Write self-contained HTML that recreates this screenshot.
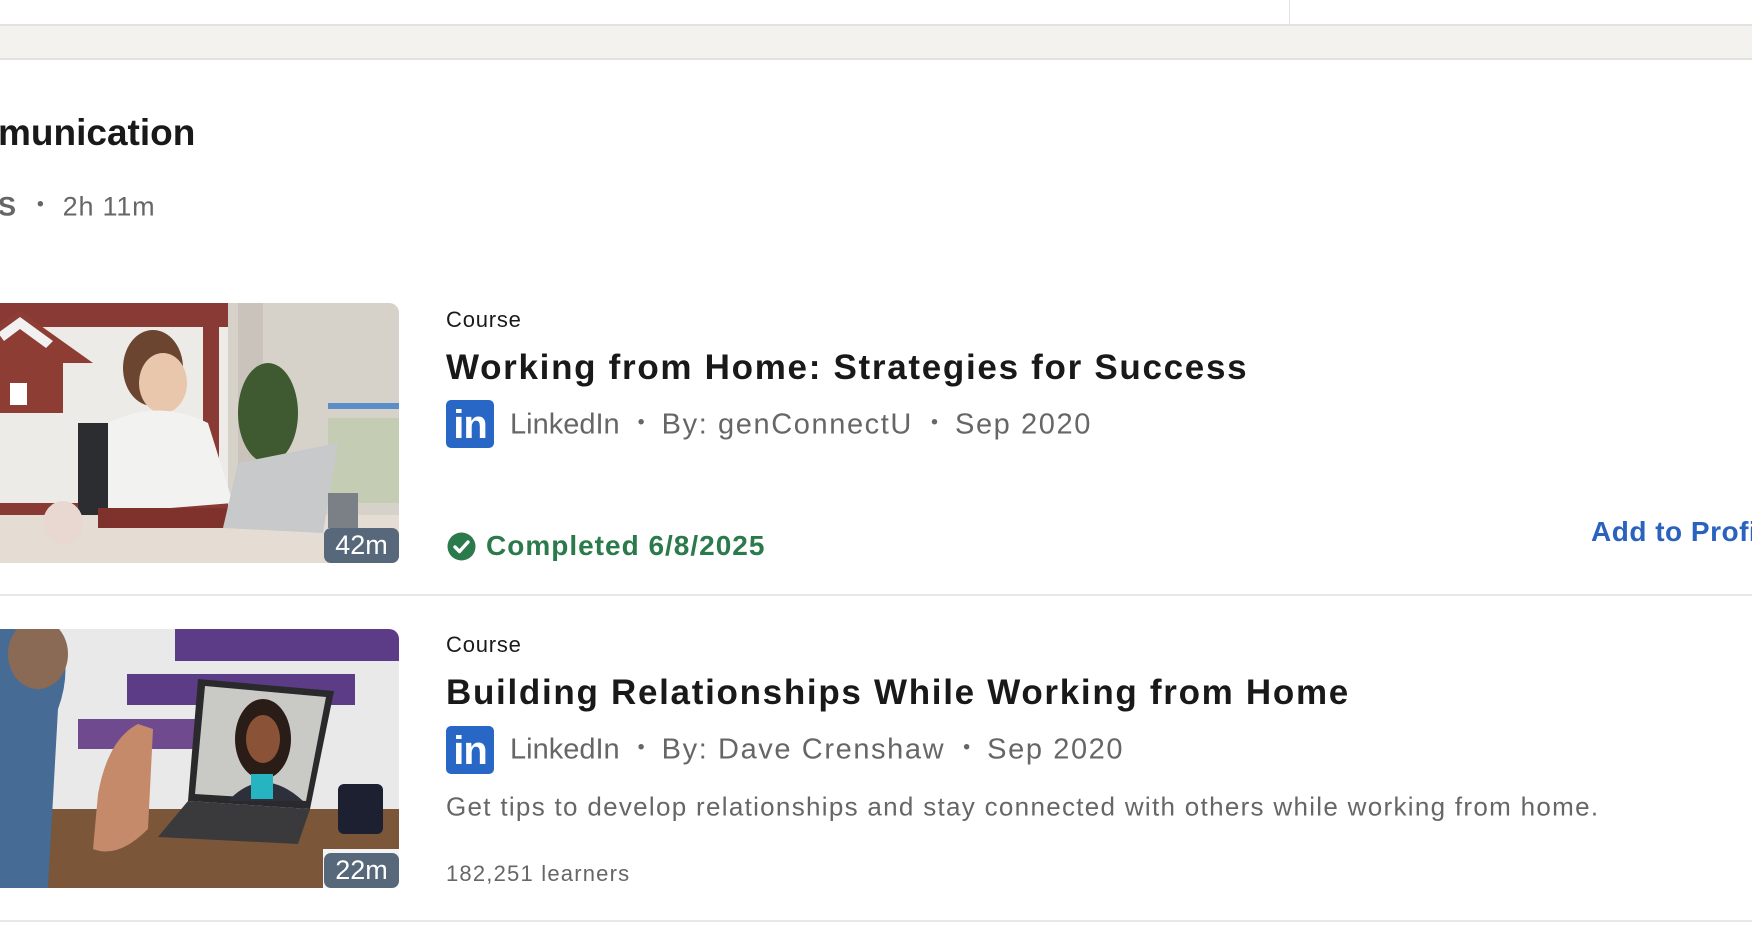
<!DOCTYPE html>
<html><head><meta charset="utf-8">
<style>
*{margin:0;padding:0;box-sizing:border-box}
body{width:1752px;height:928px;overflow:hidden;background:#fff;font-family:"Liberation Sans",Arial,sans-serif;position:relative}
.a{position:absolute;white-space:nowrap}
.c{transform:translateY(-50%)}
.li{position:absolute;width:48px;height:48px;background:#2867c5;border-radius:5px;color:#fff;font-weight:bold;font-size:40px;line-height:50px;text-align:center;letter-spacing:-1px}
.meta{color:#666;font-size:29px}
.meta .s{letter-spacing:1.6px}
.dot{display:inline-block;margin:0 17px 0 18px;font-size:20px;vertical-align:middle;position:relative;top:-3px}
.badge{position:absolute;background:#56687a;color:#fff;font-size:27px;border-radius:7px;text-align:center;line-height:35px}
.thumb{position:absolute;left:-12px;width:411px;border-radius:10px;overflow:hidden}
.t{font-size:35px;font-weight:bold;color:#191919;letter-spacing:1.7px}
</style></head><body>
<div class="a" style="left:0;top:24px;width:1752px;height:2px;background:#e2e2e2"></div>
<div class="a" style="left:0;top:26px;width:1752px;height:33px;background:#f3f2ef"></div>
<div class="a" style="left:0;top:58px;width:1752px;height:2px;background:#e2e2e2"></div>
<div class="a" style="left:1289px;top:0;width:1px;height:24px;background:#e2e2e2"></div>

<div class="a c" style="left:-2px;top:133px;font-size:37px;font-weight:bold;color:#191919">munication</div>
<div class="a c" style="left:-2px;top:207px;font-size:27px;color:#666;letter-spacing:0.8px"><b>S</b><span class="dot" style="margin:0 18px 0 20px">•</span>2h 11m</div>

<!-- thumb 1 -->
<div class="thumb" style="top:303px;height:260px">
<svg width="411" height="260" viewBox="0 0 411 260">
<rect width="411" height="260" fill="#dcd8d1"/>
<rect x="0" y="0" width="240" height="260" fill="#ecebe8"/>
<rect x="0" y="0" width="240" height="24" fill="#8a3a34"/>
<rect x="215" y="10" width="16" height="200" fill="#8a3a34"/>
<rect x="0" y="200" width="240" height="12" fill="#8a3a34"/>
<polygon points="0,30 32,8 105,60 75,60 75,110 0,110" fill="#8e3d35"/>
<polygon points="10,30 32,14 65,38 58,45 32,26 16,38" fill="#f1f1f1"/>
<rect x="22" y="80" width="17" height="22" fill="#fff"/>
<rect x="240" y="0" width="171" height="260" fill="#d6d2c9"/>
<rect x="250" y="0" width="25" height="260" fill="#c9c3bb"/>
<rect x="340" y="115" width="71" height="85" fill="#c4cdb4"/>
<rect x="340" y="100" width="71" height="6" fill="#5b8ec9"/>
<ellipse cx="280" cy="110" rx="30" ry="50" fill="#3f5a30"/>
<rect x="90" y="120" width="40" height="110" fill="#2c2d30"/>
<ellipse cx="165" cy="65" rx="30" ry="38" fill="#6b4530"/>
<ellipse cx="175" cy="80" rx="24" ry="30" fill="#e8c7ad"/>
<path d="M120 120 Q170 95 220 120 L245 200 L120 210 Z" fill="#f2f2f0"/>
<rect x="0" y="212" width="411" height="48" fill="#e5ddd3"/>
<rect x="110" y="205" width="130" height="20" fill="#7f322c"/>
<polygon points="250,160 350,140 335,230 235,225" fill="#c8c9cb"/>
<ellipse cx="75" cy="220" rx="20" ry="22" fill="#e9d8d2"/>
<rect x="340" y="190" width="30" height="35" fill="#7a8085"/>
</svg>
</div>
<div class="badge" style="left:324px;top:528px;width:75px;height:35px">42m</div>

<div class="a c" style="left:446px;top:320px;font-size:22px;color:#1a1a1a;letter-spacing:0.8px">Course</div>
<div class="a c t" style="left:446px;top:368px">Working from Home: Strategies for Success</div>
<div class="li" style="left:446px;top:400px">in</div>
<div class="a c meta" style="left:510px;top:425px">LinkedIn<span class="dot">•</span><span class="s">By: genConnectU</span><span class="dot">•</span><span class="s">Sep 2020</span></div>
<svg class="a" style="left:447px;top:532px" width="29" height="29" viewBox="0 0 29 29"><circle cx="14.5" cy="14.5" r="14" fill="#2a7a4b"/><path d="M8 15 L12.5 19.5 L21 10" stroke="#fff" stroke-width="3.4" fill="none" stroke-linecap="round" stroke-linejoin="round"/></svg>
<div class="a c" style="left:486px;top:546px;font-size:28px;font-weight:bold;color:#2a7a4b;letter-spacing:1px">Completed 6/8/2025</div>
<div class="a c" style="left:1591px;top:532px;font-size:28px;font-weight:bold;color:#2a62c0;letter-spacing:0.5px">Add to Profile</div>

<div class="a" style="left:0;top:594px;width:1752px;height:2px;background:#e8e8e8"></div>

<!-- thumb 2 -->
<div class="thumb" style="top:629px;height:259px">
<svg width="411" height="259" viewBox="0 0 411 259">
<rect width="411" height="259" fill="#e9e9ea"/>
<rect x="187" y="0" width="224" height="32" fill="#5c3c86"/>
<rect x="139" y="45" width="228" height="31" fill="#5c3c86"/>
<rect x="90" y="90" width="140" height="30" fill="#6f4a8e"/>
<rect x="0" y="180" width="411" height="79" fill="#7b5638"/>
<polygon points="210,50 346,62 322,180 200,172" fill="#2a2a2c"/>
<polygon points="217,57 338,68 318,172 207,165" fill="#c9c9c6"/>
<ellipse cx="275" cy="110" rx="28" ry="40" fill="#2a1c17"/>
<ellipse cx="275" cy="110" rx="17" ry="24" fill="#8a5236"/>
<path d="M240 172 Q275 135 315 172 Z" fill="#2d2f3a"/>
<rect x="263" y="145" width="22" height="25" fill="#27b4c2"/>
<polygon points="200,172 322,180 310,215 170,208" fill="#3a3a3d"/>
<rect x="350" y="155" width="45" height="50" rx="6" fill="#1c2030"/>
<path d="M0 0 L70 0 Q85 40 70 80 L60 259 L0 259 Z" fill="#466b94"/>
<ellipse cx="50" cy="25" rx="30" ry="35" fill="#8a6a55"/>
<path d="M110 165 Q120 110 150 95 L165 100 L160 200 Q130 230 105 220 Z" fill="#c48a6a"/>
<rect x="335" y="220" width="76" height="39" fill="#f4f4f4"/>
</svg>
</div>
<div class="badge" style="left:324px;top:853px;width:75px;height:35px">22m</div>

<div class="a c" style="left:446px;top:645px;font-size:22px;color:#1a1a1a;letter-spacing:0.8px">Course</div>
<div class="a c t" style="left:446px;top:693px">Building Relationships While Working from Home</div>
<div class="li" style="left:446px;top:726px">in</div>
<div class="a c meta" style="left:510px;top:750px">LinkedIn<span class="dot">•</span><span class="s">By: Dave Crenshaw</span><span class="dot">•</span><span class="s">Sep 2020</span></div>
<div class="a c" style="left:446px;top:807px;font-size:26px;color:#666;letter-spacing:1.3px">Get tips to develop relationships and stay connected with others while working from home.</div>
<div class="a c" style="left:446px;top:874px;font-size:22px;color:#666;letter-spacing:1.2px">182,251 learners</div>

<div class="a" style="left:0;top:920px;width:1752px;height:2px;background:#e8e8e8"></div>
</body></html>
